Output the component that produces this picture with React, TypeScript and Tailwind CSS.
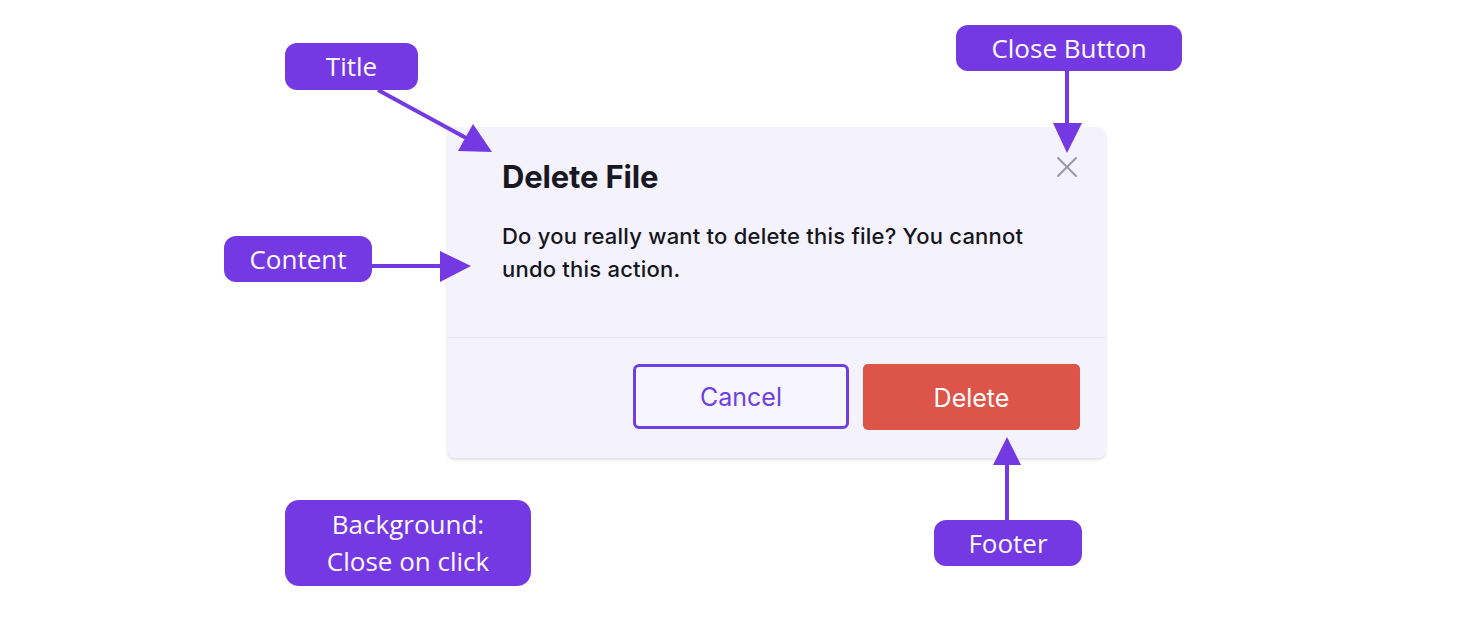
import { X } from "lucide-react";

const labels = [
  { text: "Title", box: "left-[285px] top-[43px] w-[133px] h-[47px]" },
  { text: "Close Button", box: "left-[956px] top-[25px] w-[226px] h-[46px]" },
  { text: "Content", box: "left-[224px] top-[236px] w-[148px] h-[46px]" },
  { text: "Footer", box: "left-[934px] top-[520px] w-[148px] h-[46px]" },
];

const Arrows = () => (
  <svg
    className="pointer-events-none absolute left-0 top-0"
    width="1459"
    height="617"
    viewBox="0 0 1459 617"
  >
    <g stroke="#7539e4" strokeWidth="4" fill="#7539e4">
      {/* title */}
      <line x1="378" y1="90" x2="468" y2="139" />
      <polygon points="492,152 458,151 473,124" stroke="none" />
      {/* close button */}
      <line x1="1067" y1="71" x2="1067" y2="125" />
      <polygon points="1053,123 1082,123 1067,153" stroke="none" />
      {/* content */}
      <line x1="372" y1="266" x2="442" y2="266" />
      <polygon points="440,251 440,282 471,266" stroke="none" />
      {/* footer */}
      <line x1="1007" y1="520" x2="1007" y2="463" />
      <polygon points="993,465 1021,465 1007,437" stroke="none" />
    </g>
  </svg>
);

export default function App() {
  return (
    <div className="relative w-[1459px] h-[617px] bg-white overflow-hidden">
      {/* dialog */}
      <div className="pt-[127px] pl-[447px]">
        <div className="w-[659px] rounded-[8px] bg-[#f4f2fd] shadow-[0_2px_3px_rgba(0,0,0,0.12)] font-['Inter',sans-serif]">
          <div className="h-[210px] pl-[55px] pr-[21px] pt-[22px]">
            <div className="flex items-start justify-between">
              <h2 className="mt-[10px] text-[31px] leading-[36px] font-bold tracking-[-0.005em] text-[#181822]">
                Delete File
              </h2>
              <button type="button" className="text-[#9a98a4]">
                <X size={36} strokeWidth={1.3} />
              </button>
            </div>
            <p className="mt-[25px] w-[550px] text-[22px] leading-[33px] font-medium tracking-[0.01em] text-[#15151c]">
              Do you really want to delete this file? You cannot undo this action.
            </p>
          </div>
          <div className="border-t border-[#e5e3ee] flex justify-end gap-[14px] pt-[26px] pb-[28px] pr-[26px]">
            <button
              type="button"
              className="w-[216px] h-[65px] pt-[3px] rounded-[6px] border-[3px] border-[#6e40e2] bg-[#f7f5ff] text-[25px] text-[#6e40e2]"
            >
              Cancel
            </button>
            <button
              type="button"
              className="w-[217px] h-[66px] pt-[3px] rounded-[5px] bg-[#dd5449] text-[25px] text-white"
            >
              Delete
            </button>
          </div>
        </div>
      </div>

      {/* annotations */}
      <Arrows />
      {labels.map((l) => (
        <div
          key={l.text}
          className={`absolute ${l.box} flex items-center justify-center rounded-[12px] bg-[#7539e4] text-[26px] text-[#fbfaff] font-['Open_Sans',sans-serif]`}
        >
          {l.text}
        </div>
      ))}
      <div className="absolute left-[285px] top-[500px] w-[246px] h-[86px] flex flex-col items-center justify-center rounded-[14px] bg-[#7539e4] text-[26px] leading-[37px] text-[#fbfaff] font-['Open_Sans',sans-serif]">
        <span>Background:</span>
        <span>Close on click</span>
      </div>
    </div>
  );
}
